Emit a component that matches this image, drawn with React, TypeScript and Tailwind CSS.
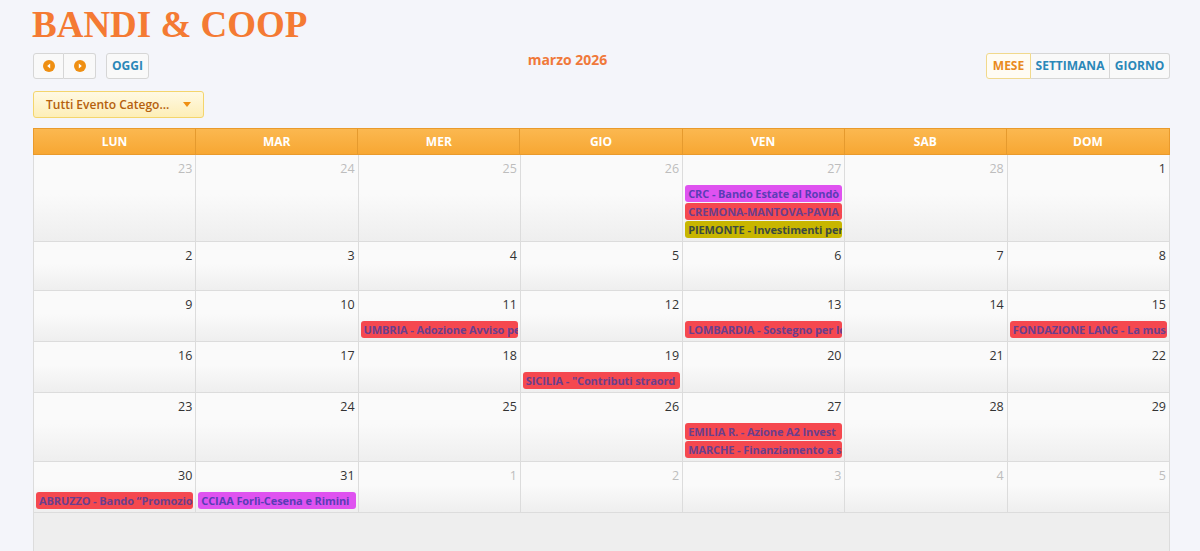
import React from 'react';

type Ev = { title: string; color: 'red' | 'pink' | 'olive' };

const evStyles: Record<Ev['color'], string> = {
  red: 'bg-[#f5484f] text-[#6a3f8e]',
  pink: 'bg-[#df52f0] text-[#5a3db6]',
  olive: 'bg-[#c8b600] text-[#3c4a40]',
};

const weekdays = ['LUN', 'MAR', 'MER', 'GIO', 'VEN', 'SAB', 'DOM'];

// each week: 7 days as [day, inMonth]
const weeks: { days: [number, boolean][]; events: Record<number, Ev[]> }[] = [
  {
    days: [[23, false], [24, false], [25, false], [26, false], [27, false], [28, false], [1, true]],
    events: {
      4: [
        { title: 'CRC - Bando Estate al Rondò', color: 'pink' },
        { title: 'CREMONA-MANTOVA-PAVIA - B', color: 'red' },
        { title: 'PIEMONTE - Investimenti per', color: 'olive' },
      ],
    },
  },
  { days: [[2, true], [3, true], [4, true], [5, true], [6, true], [7, true], [8, true]], events: {} },
  {
    days: [[9, true], [10, true], [11, true], [12, true], [13, true], [14, true], [15, true]],
    events: {
      2: [{ title: 'UMBRIA - Adozione Avviso per', color: 'red' }],
      4: [{ title: 'LOMBARDIA - Sostegno per le', color: 'red' }],
      6: [{ title: 'FONDAZIONE LANG - La musica', color: 'red' }],
    },
  },
  {
    days: [[16, true], [17, true], [18, true], [19, true], [20, true], [21, true], [22, true]],
    events: { 3: [{ title: 'SICILIA - "Contributi straord', color: 'red' }] },
  },
  {
    days: [[23, true], [24, true], [25, true], [26, true], [27, true], [28, true], [29, true]],
    events: {
      4: [
        { title: 'EMILIA R. - Azione A2 Invest', color: 'red' },
        { title: 'MARCHE - Finanziamento a s', color: 'red' },
      ],
    },
  },
  {
    days: [[30, true], [31, true], [1, false], [2, false], [3, false], [4, false], [5, false]],
    events: {
      0: [{ title: 'ABRUZZO - Bando “Promozio', color: 'red' }],
      1: [{ title: 'CCIAA Forlì-Cesena e Rimini', color: 'pink' }],
    },
  },
];

function ArrowIcon({ dir }: { dir: 'left' | 'right' }) {
  return (
    <svg width="12" height="12" viewBox="0 0 12 12">
      <circle cx="6" cy="6" r="6" fill="#ef8f12" />
      {dir === 'left' ? (
        <path d="M7.2 3.4 L4.2 6 L7.2 8.6 Z" fill="#fff" />
      ) : (
        <path d="M4.8 3.4 L7.8 6 L4.8 8.6 Z" fill="#fff" />
      )}
    </svg>
  );
}

export default function App() {
  return (
    <div className="min-h-[551px] bg-[#f4f5fa] pl-[33px] pr-[30px] font-['Open_Sans',sans-serif]">
      <h1 className="pt-[6px] font-['Liberation_Serif',serif] text-[37px] leading-none font-bold text-[#f47a33] -ml-px">
        BANDI &amp; COOP
      </h1>

      {/* toolbar */}
      <div className="mt-[10px] flex items-center h-[26px]">
        <div className="flex items-center gap-[10px]">
          <div className="flex h-[26px]">
            <button className="w-[31px] h-[26px] flex items-center justify-center rounded-l-[3px] border border-[#d6d6d6] bg-[#f9f9f9]">
              <ArrowIcon dir="left" />
            </button>
            <button className="w-[32px] h-[26px] flex items-center justify-center rounded-r-[3px] border border-l-0 border-[#d6d6d6] bg-[#f9f9f9]">
              <ArrowIcon dir="right" />
            </button>
          </div>
          <button className="w-[43px] h-[26px] rounded-[3px] border border-[#d6d6d6] bg-[#f9f9f9] text-[12px] font-bold text-[#2a87b8]">
            OGGI
          </button>
        </div>
        <div className="flex-1 text-center text-[14px] font-bold text-[#f0793a] -mt-[13px]">marzo 2026</div>
        <div className="flex h-[26px] text-[12px] font-bold">
          <button className="w-[45px] rounded-l-[3px] border border-[#f1d98c] bg-[#fffcf3] text-[#e98a1e]">MESE</button>
          <button className="w-[79px] border border-l-0 border-[#d6d6d6] bg-[#f9f9f9] text-[#2a87b8]">SETTIMANA</button>
          <button className="w-[60px] rounded-r-[3px] border border-l-0 border-[#d6d6d6] bg-[#f9f9f9] text-[#2a87b8]">GIORNO</button>
        </div>
      </div>

      {/* category filter */}
      <div className="mt-[12px] w-[171px] h-[27px] flex items-center pl-[12px] gap-[14px] rounded-[3px] border border-[#f4d56c] bg-[linear-gradient(to_bottom,#fff9e3,#fdeeb7)] text-[12px] font-semibold text-[#b5600d]">
        <span>Tutti Evento Catego...</span>
        <svg width="8" height="5" viewBox="0 0 8 5">
          <path d="M0 0 H8 L4 5 Z" fill="#ef8f12" />
        </svg>
      </div>

      {/* month grid */}
      <div className="mt-[10px]">
        <div className="grid grid-cols-7 h-[27px] border border-[#e99a2c] bg-[linear-gradient(to_bottom,#fbb850,#f7a733)]">
          {weekdays.map((d, i) => (
            <div
              key={d}
              className={`flex items-center justify-center text-[12px] font-bold text-white ${i < 6 ? 'border-r border-[#e59a2e]' : ''}`}
            >
              {d}
            </div>
          ))}
        </div>

        {weeks.map((w, wi) => (
          <div
            key={wi}
            className="grid grid-cols-7 border-l border-[#dcdcdc] bg-[linear-gradient(to_bottom,#fafafa_45%,#eeeeee)]"
          >
            {w.days.map(([day, inMonth], di) => (
              <div key={di} className="min-h-[49px] border-r border-b border-[#dcdcdc] pb-[3px]">
                <div
                  className={`h-[30px] pt-[4px] pr-[3px] text-right text-[12.5px] leading-[20px] ${inMonth ? 'text-[#333]' : 'text-[#bdbdbd]'}`}
                >
                  {day}
                </div>
                <div className="flex flex-col gap-[1px] px-[2px]">
                  {(w.events[di] ?? []).map((ev, ei) => (
                    <div
                      key={ei}
                      className={`h-[17px] overflow-hidden whitespace-nowrap rounded-[3px] pl-[3px] text-[11px] leading-[17px] font-bold tracking-[-0.1px] ${evStyles[ev.color]}`}
                    >
                      {ev.title}
                    </div>
                  ))}
                </div>
              </div>
            ))}
          </div>
        ))}
        <div className="h-[60px] border-l border-r border-[#dcdcdc] bg-[#eeeeee]" />
      </div>
    </div>
  );
}
